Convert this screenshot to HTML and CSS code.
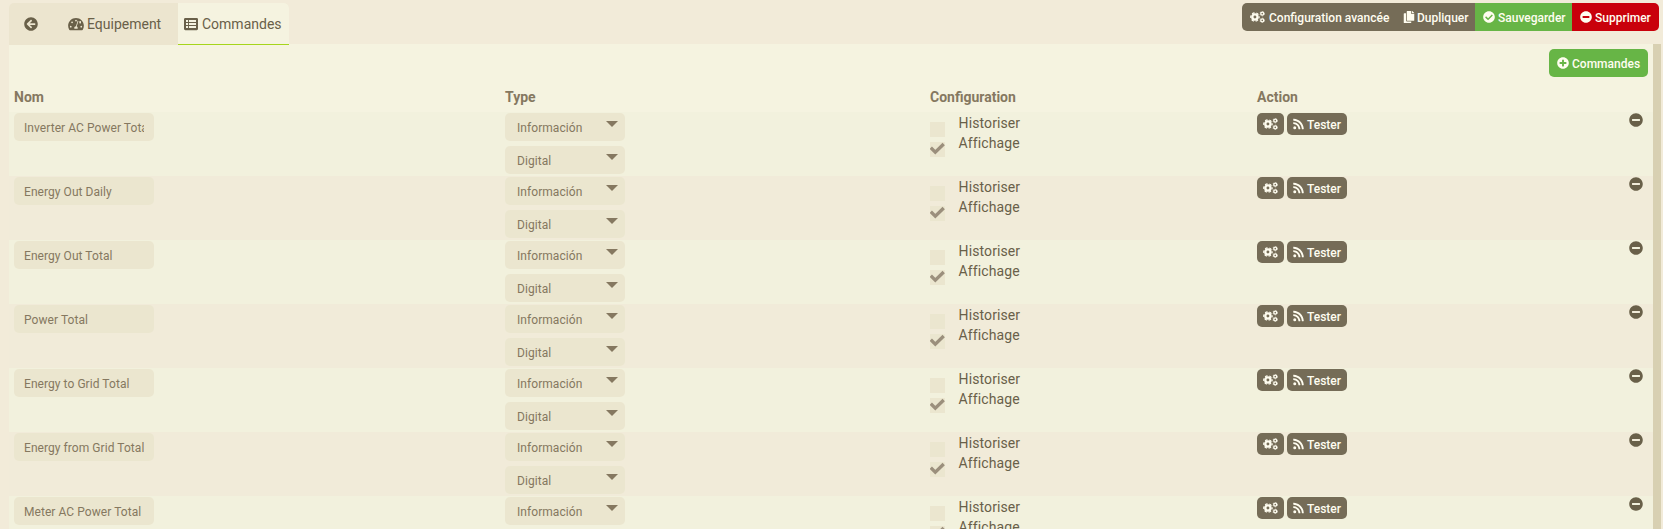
FILE: index.html
```html
<!DOCTYPE html>
<html lang="fr">
<head>
<meta charset="utf-8">
<title>Commandes</title>
<link rel="stylesheet" href="styles.css">
</head>
<body>
<svg class="defs" aria-hidden="true">
<symbol id="left" viewBox="0 0 512 512"><path d="M256 504C119 504 8 393 8 256S119 8 256 8s248 111 248 248-111 248-248 248zm28.900-143.600L209.400 288H392c13.300 0 24-10.700 24-24v-16c0-13.300-10.700-24-24-24H209.400l75.500-72.400c9.700-9.300 9.900-24.800.4-34.300l-11-10.900c-9.400-9.400-24.600-9.400-33.900 0L107.700 239c-9.400 9.400-9.400 24.600 0 33.900l132.700 132.700c9.400 9.400 24.600 9.400 33.900 0l11-10.900c9.500-9.500 9.300-25-.4-34.300z"/></symbol>
<symbol id="gauge" viewBox="0 0 576 512"><path fill-rule="evenodd" d="M288 32C129 32 0 161 0 320c0 53 14 102 39 145 6 9 16 15 27 15h444c11 0 21-6 27-15 25-43 39-92 39-145C576 161 447 32 288 32zM64 352a32 32 0 1 0 64 0 32 32 0 1 0-64 0zM112 192a32 32 0 1 0 64 0 32 32 0 1 0-64 0zM256 128a32 32 0 1 0 64 0 32 32 0 1 0-64 0zM448 352a32 32 0 1 0 64 0 32 32 0 1 0-64 0zM410 192a32 32 0 1 0 60 0 32 32 0 1 0-60 0zM358 137c12 4 19 18 15 31l-58 173c22 12 37 33 37 59 0 11-3 23-9 32H233c-6-9-9-21-9-32 0-34 27-61 61-64l58-172c-4-4 0-32 15-27z"/></symbol>
<symbol id="list" viewBox="0 0 512 512"><path fill-rule="evenodd" d="M48 32h416a48 48 0 0 1 48 48v352a48 48 0 0 1-48 48H48a48 48 0 0 1-48-48V80a48 48 0 0 1 48-48zM74 112v70h74v-70zm108 0v70h256v-70zM74 220v70h74v-70zm108 0v70h256v-70zM74 328v70h74v-70zm108 0v70h256v-70z"/></symbol>
<symbol id="minus" viewBox="0 0 512 512"><path d="M256 8C119 8 8 119 8 256s111 248 248 248 248-111 248-248S393 8 256 8zM124 296c-6.600 0-12-5.400-12-12v-56c0-6.600 5.400-12 12-12h264c6.600 0 12 5.400 12 12v56c0 6.600-5.400 12-12 12H124z"/></symbol>
<symbol id="plus" viewBox="0 0 512 512"><path d="M256 8C119 8 8 119 8 256s111 248 248 248 248-111 248-248S393 8 256 8zm144 276c0 6.600-5.400 12-12 12h-92v92c0 6.600-5.400 12-12 12h-56c-6.600 0-12-5.400-12-12v-92h-92c-6.600 0-12-5.400-12-12v-56c0-6.600 5.400-12 12-12h92v-92c0-6.600 5.400-12 12-12h56c6.600 0 12 5.400 12 12v92h92c6.600 0 12 5.400 12 12v56z"/></symbol>
<symbol id="ok" viewBox="0 0 512 512"><path d="M504 256c0 136.967-111.033 248-248 248S8 392.967 8 256 119.033 8 256 8s248 111.033 248 248zM227.314 387.314l184-184c6.248-6.248 6.248-16.379 0-22.627l-22.627-22.627c-6.248-6.249-16.379-6.249-22.628 0L216 308.118l-70.059-70.059c-6.248-6.248-16.379-6.248-22.628 0l-22.627 22.627c-6.248 6.248-6.248 16.379 0 22.627l104 104c6.249 6.249 16.379 6.249 22.628.001z"/></symbol>
<symbol id="copy" viewBox="0 0 448 512"><path d="M320 448v40c0 13.255-10.745 24-24 24H24c-13.255 0-24-10.745-24-24V120c0-13.255 10.745-24 24-24h72v296c0 30.879 25.121 56 56 56h168zm0-344V0H152c-13.255 0-24 10.745-24 24v368c0 13.255 10.745 24 24 24h272c13.255 0 24-10.745 24-24V128H344c-13.200 0-24-10.800-24-24zm121-31L375 7a24 24 0 0 0-17-7h-6v96h96v-6a24 24 0 0 0-7-17z"/></symbol>
<symbol id="rss" viewBox="0 0 448 512"><path d="M128 416a64 64 0 1 1-128 0 64 64 0 0 1 128 0zm175.700 47.200C295.400 308.600 171.600 184.600 16.800 176.300 7.700 175.800 0 183.100 0 192.300v48c0 8.400 6.500 15.500 14.900 16 111.800 7.300 201.500 96.700 208.800 208.800.5 8.400 7.600 14.900 16 14.900h48c9.200 0 16.500-7.700 16-16.800zm144.300.3C439.600 229.700 251.500 40.400 16.500 32 7.500 31.700 0 39 0 48v48c0 8.600 6.800 15.600 15.500 16 191.100 7.800 344.600 161.300 352.400 352.500.4 8.600 7.400 15.500 16 15.500h48c9.100 0 16.400-7.500 16.100-16.500z"/></symbol>
<symbol id="cogs" viewBox="0 0 640 512"><g fill="none" stroke="currentColor"><circle cx="210" cy="256" r="112" stroke-width="100"/><circle cx="210" cy="256" r="180" stroke-width="50" stroke-dasharray="110 78.500" stroke-dashoffset="55"/><circle cx="522" cy="112" r="62" stroke-width="58"/><circle cx="522" cy="112" r="98" stroke-width="24" stroke-dasharray="56 46.600"/><circle cx="522" cy="400" r="62" stroke-width="58"/><circle cx="522" cy="400" r="98" stroke-width="24" stroke-dasharray="56 46.600"/></g></symbol>
<symbol id="tick" viewBox="0 0 15 15"><path d="M.8 5.800 5.300 10.200 13.700 2" fill="none" stroke="currentColor" stroke-width="3.300"/></symbol>
</svg>
<header class="top">
  <nav class="tabs">
    <a class="tab back"><svg class="i14"><use href="#left"/></svg></a>
    <a class="tab equip"><svg class="i16"><use href="#gauge"/></svg><span>Equipement</span></a>
    <a class="tab active"><svg class="i14"><use href="#list"/></svg><span>Commandes</span></a>
  </nav>
  <div class="group">
    <a class="btn adv"><svg class="i15"><use href="#cogs"/></svg><span>Configuration avancée</span></a>
    <a class="btn dup"><svg class="i12"><use href="#copy"/></svg><span>Dupliquer</span></a>
    <a class="btn save"><svg class="i12"><use href="#ok"/></svg><span>Sauvegarder</span></a>
    <a class="btn del"><svg class="i12"><use href="#minus"/></svg><span>Supprimer</span></a>
  </div>
</header>
<main class="panel">
  <div class="toolbar"><a class="btn add"><svg class="i12"><use href="#plus"/></svg><span>Commandes</span></a></div>
  <div class="cols head"><span>Nom</span><span>Type</span><span>Configuration</span><span>Action</span></div>
  <div id="rows"></div>
</main>
<script src="rows.js"></script>
</body>
</html>
```
FILE: styles.css
```css
* { box-sizing: border-box; }
body { margin: 0; height: 529px; overflow: hidden; background: #f2ebd9; color: #696049; font: 14px/20px Roboto, sans-serif; }
svg { fill: currentColor; flex: none; }
.defs { position: absolute; width: 0; height: 0; }
.i11 { width: 11px; height: 12px; }
.i12 { width: 12px; height: 12px; }
.i14 { width: 14px; height: 14px; }
.i15 { width: 15px; height: 12px; }
.i16 { width: 16px; height: 14px; }
.top { display: flex; justify-content: space-between; align-items: flex-start; height: 44px; padding: 3px 4px 0 9px; }
.tabs { display: flex; height: 42px; border-radius: 5px 5px 0 0; background: #ece5cf; overflow: hidden; position: relative; z-index: 1; }
.tab { display: flex; align-items: center; gap: 4px; padding-bottom: 1px; }
.tab span { padding-top: 1px; }
.back { width: 44px; padding-left: 15px; }
.equip { width: 125px; padding-left: 15px; gap: 3px; }
.active { width: 111px; padding: 0 0 0 6px; background: #f5f3e0; border-bottom: 1px solid #a6d51c; }
.group { display: flex; height: 28px; border-radius: 5px; overflow: hidden; }
.btn { display: flex; align-items: center; gap: 3px; padding-left: 8px; height: 28px; color: #fffdf0; font-size: 12px; font-weight: 500; white-space: nowrap; background: #756c57; }
.btn span { padding-top: 1px; }
.adv { width: 153px; gap: 4px; }
.dup { width: 80px; gap: 2px; }
.save { width: 97px; background: #67b546; }
.del { width: 87px; background: #c9000b; }
.panel { height: 485px; margin: 0 2px 0 9px; border-right: 8px solid #d8d0b2; background: #f5f3e0; overflow: hidden; }
.toolbar { display: flex; justify-content: flex-end; padding: 5px 5px 0 0; height: 42px; }
.add { width: 99px; border-radius: 5px; background: #67b546; }
.cols { display: grid; grid-template-columns: 491px 425px 327px 1fr; padding-left: 5px; }
.head { height: 26px; line-height: 22px; font-weight: 700; color: #857860; }
.row { height: 64px; padding-top: 1px; background: #f2f1dd; }
.row:nth-child(even) { background: #f1ebd9; }
.field { width: 140px; height: 28px; padding: 0 10px; border-radius: 5px; background: #ebe6cf; color: #857860; font-size: 12px; line-height: 30px; letter-spacing: .06px; }
.name { overflow: hidden; white-space: nowrap; }
.name span { display: block; overflow: hidden; }
.select { display: flex; justify-content: space-between; width: 120px; padding: 0 7px 0 12px; margin-bottom: 5px; }
.select::after { content: ""; border: 6px solid transparent; border-top-color: #857860; border-bottom: 0; height: 6px; margin-top: 8px; }
.opt { display: flex; height: 20px; line-height: 20px; gap: 13.6px; letter-spacing: .1px; }
.box { width: 15px; height: 15px; margin-top: 9px; background: #ebe6cf; color: #9b8f7c; }
.actions { display: flex; gap: 3px; }
.small { height: 22px; border-radius: 5px; padding-left: 6px; gap: 3px; }
.small span { padding-top: 2px; }
.cog { width: 27px; }
.test { width: 60px; }
.remove { margin: 0 10px 0 auto; }
```
FILE: rows.js
```js
const names = ["Inverter AC Power Total", "Energy Out Daily", "Energy Out Total", "Power Total", "Energy to Grid Total", "Energy from Grid Total", "Meter AC Power Total"];
document.getElementById("rows").innerHTML = names.map(name => `
  <div class="cols row">
    <div class="field name"><span>${name}</span></div>
    <div><div class="field select">Información</div><div class="field select">Digital</div></div>
    <div><div class="opt"><i class="box"></i>Historiser</div><div class="opt"><svg class="box"><use href="#tick"/></svg>Affichage</div></div>
    <div class="actions"><a class="btn small cog"><svg class="i15"><use href="#cogs"/></svg></a><a class="btn small test"><svg class="i11"><use href="#rss"/></svg><span>Tester</span></a><svg class="i14 remove"><use href="#minus"/></svg></div>
  </div>`).join("");
```
